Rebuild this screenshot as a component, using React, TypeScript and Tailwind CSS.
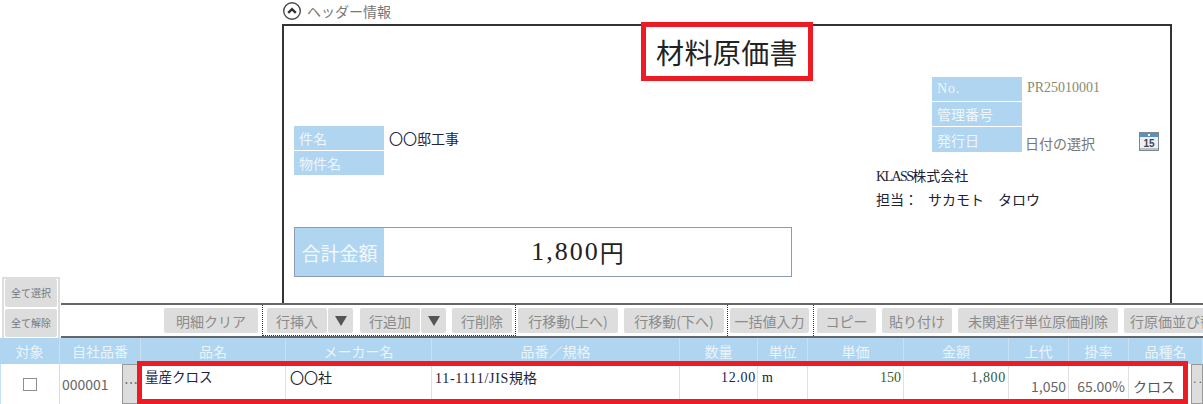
import React from 'react';

const sans = "font-['Noto_Sans_CJK_JP','Noto_Sans',sans-serif]";
const serif = "font-['Liberation_Serif',serif] text-[14px]";
const gridCols = 'grid-cols-[60px_81px_145px_146px_248px_78px_50px_96px_105px_60px_60px_62px_12px]';

const headers = [
  { label: '対象', span: 'col-span-1' },
  { label: '自社品番', span: 'col-span-1' },
  { label: '品名', span: 'col-span-1' },
  { label: 'メーカー名', span: 'col-span-1' },
  { label: '品番／規格', span: 'col-span-1' },
  { label: '数量', span: 'col-span-1' },
  { label: '単位', span: 'col-span-1' },
  { label: '単価', span: 'col-span-1' },
  { label: '金額', span: 'col-span-1' },
  { label: '上代', span: 'col-span-1' },
  { label: '掛率', span: 'col-span-1' },
  { label: '品種名', span: 'col-span-2' },
];

const ToolButton: React.FC<{ width: string; children: React.ReactNode; className?: string }> = ({
  width,
  children,
  className = '',
}) => (
  <button
    type="button"
    className={`flex h-[25px] shrink-0 items-center justify-center overflow-hidden whitespace-nowrap rounded-[2px] bg-[#dddddd] text-[14px] leading-none text-[#8b8b8b] ${width} ${className}`}
  >
    {children}
  </button>
);

const Arrow = () => (
  <svg width="14" height="12" viewBox="0 0 14 12" aria-hidden="true">
    <path d="M1 1h12L7 11z" fill="#555555" />
  </svg>
);

const BlueLabel: React.FC<{ children: React.ReactNode; className?: string }> = ({ children, className = '' }) => (
  <div
    className={`flex h-[24px] w-[90px] shrink-0 items-center bg-[#b0d5f0] pl-[5px] text-[14px] leading-none text-[#eef6fc] ${className}`}
  >
    {children}
  </div>
);

const CalendarIcon = () => (
  <svg width="20" height="19" viewBox="0 0 20 19" aria-hidden="true">
    <rect x="0.5" y="0.5" width="19" height="18" fill="#eef1f4" stroke="#7c8792" />
    <rect x="1" y="1" width="18" height="4" fill="#5b8fc0" />
    <rect x="9" y="2" width="2" height="2" fill="#ffffff" />
    <rect x="1" y="16" width="18" height="2" fill="#b9c0c8" />
    <text x="10" y="15" textAnchor="middle" fontSize="10" fontWeight="700" fill="#3c4650" fontFamily="Liberation Sans, sans-serif">
      15
    </text>
  </svg>
);

export default function App() {
  return (
    <div className={`relative h-[404px] w-[1203px] overflow-hidden bg-white ${sans}`}>
      <div className="flex h-[338px]">
        <div className="flex w-[61px] shrink-0 items-end pl-[2px]">
          <div className="flex h-[61px] w-[58px] flex-col gap-[2px] border-[2px] border-b-0 border-[#dddddd] px-[1px]">
            {['全て選択', '全て解除'].map((label) => (
              <button
                key={label}
                type="button"
                className="flex h-[28px] items-center justify-center rounded-[2px] bg-[#dddddd] text-[10px] leading-none text-[#777777]"
              >
                {label}
              </button>
            ))}
          </div>
        </div>

        <div className="flex min-w-0 flex-1 flex-col">
          <div className="flex h-[24px] items-center gap-[6px] pb-[3px] pl-[222px]">
            <svg width="18" height="18" viewBox="0 0 18 18" aria-hidden="true">
              <circle cx="9" cy="9" r="8.3" fill="none" stroke="#4a4a4a" strokeWidth="1.4" />
              <path d="M5.2 10.8 9 7.2l3.8 3.6" fill="none" stroke="#2f2f2f" strokeWidth="2.4" />
            </svg>
            <span className="text-[14px] leading-none text-[#777777]">ヘッダー情報</span>
          </div>

          <div className="ml-[221px] h-[279px] w-[890px] border-[2px] border-b-0 border-[#333333]">
            <div className="flex h-[51px] items-center justify-center">
              <span className="text-[28px] leading-none tracking-[0.4px] text-[#222222]">材料原価書</span>
            </div>

            <div className="flex">
              <div className="ml-[10px] w-[498px] pt-[49px]">
                <div className="flex h-[24px] items-center">
                  <BlueLabel>件名</BlueLabel>
                  <span className="ml-[5px] text-[14px] leading-none text-[#222244]">〇〇邸工事</span>
                </div>
                <BlueLabel className="mt-[1px]">物件名</BlueLabel>

                <div className="mt-[52px] flex h-[50px] items-stretch border border-[#8c9cb0]">
                  <div className="flex w-[89px] items-center justify-center bg-[#b0d5f0] text-[19px] leading-none text-[#f2f8fd]">
                    合計金額
                  </div>
                  <div className="flex flex-1 items-center justify-center pr-[20px] text-[24px] leading-none text-[#222222]">
                    <span className="font-['Liberation_Serif',serif] text-[26px] tracking-[2px]">1,800</span>円
                  </div>
                </div>
              </div>

              <div className="ml-[84px] flex-1">
                <div className="ml-[56px]">
                  <div className="flex">
                    <BlueLabel className={`tracking-[1px] ${serif}`}>No.</BlueLabel>
                    <span className={`ml-[5px] mt-[3px] leading-[16px] text-[#8a8a70] ${serif}`}>PR25010001</span>
                  </div>
                  <BlueLabel className="mt-[1px]">管理番号</BlueLabel>
                  <div className="mt-[1px] flex">
                    <BlueLabel className="h-[25px]">発行日</BlueLabel>
                    <span className="ml-[3px] mt-[8px] text-[14px] leading-[16px] text-[#777777]">日付の選択</span>
                    <span className="ml-[44px] mt-[5px]">
                      <CalendarIcon />
                    </span>
                  </div>
                </div>
                <div className="mt-[13px] text-[14px] leading-[20px] text-[#222233]">
                  <span className="font-['Liberation_Serif',serif] text-[14px] tracking-[-1.6px]">KLASS</span>株式会社
                </div>
                <div className="mt-[2px] flex text-[14px] leading-[20px] text-[#222233]">
                  <span>担当：</span>
                  <span className="ml-[10px]">サカモト</span>
                  <span className="ml-[14px]">タロウ</span>
                </div>
              </div>
            </div>
          </div>

          <div className="flex h-[35px] items-start border-y-[2px] border-y-[#666666] pl-[103px]">
            <ToolButton width="w-[94px]" className="mt-[3px]">明細クリア</ToolButton>

            <div className="ml-[4px] flex h-[31px] w-[254px] shrink-0 items-start border-x border-b border-dotted border-[#333333] pl-[4px] pt-[3px]">
              <ToolButton width="w-[60px]">行挿入</ToolButton>
              <ToolButton width="w-[25px]" className="ml-[1px]"><Arrow /></ToolButton>
              <ToolButton width="w-[60px]" className="ml-[7px]">行追加</ToolButton>
              <ToolButton width="w-[25px]" className="ml-[1px]"><Arrow /></ToolButton>
              <ToolButton width="w-[60px]" className="ml-[6px]">行削除</ToolButton>
            </div>

            <div className="flex h-[31px] w-[212px] shrink-0 items-start gap-[6px] border-r border-dotted border-r-[#333333] pl-[2px] pt-[3px]">
              <ToolButton width="w-[100px]">行移動(上へ)</ToolButton>
              <ToolButton width="w-[100px]">行移動(下へ)</ToolButton>
            </div>

            <div className="flex h-[31px] w-[86px] shrink-0 items-start border-r border-dotted border-r-[#333333] pl-[2px] pt-[3px]">
              <ToolButton width="w-[79px]">一括値入力</ToolButton>
            </div>

            <div className="flex shrink-0 items-start gap-[6px] pl-[3px] pt-[3px]">
              <ToolButton width="w-[59px]">コピー</ToolButton>
              <ToolButton width="w-[70px]">貼り付け</ToolButton>
              <ToolButton width="w-[160px]">未関連行単位原価削除</ToolButton>
              <ToolButton width="w-[110px]">行原価並び替え</ToolButton>
            </div>
          </div>
        </div>
      </div>

      <div className={`grid h-[26px] ${gridCols} bg-[#b0d5f0]`}>
        {headers.map((header) => (
          <div
            key={header.label}
            className={`flex items-center justify-center border-r border-[#c6e0f4] text-[14px] leading-none text-[#eaf4fb] ${header.span}`}
          >
            {header.label}
          </div>
        ))}
      </div>

      <div className={`grid h-[40px] ${gridCols} text-[14px] leading-none`}>
        <div className="flex items-center justify-center border-x border-[#c6e0f4]">
          <span className="block h-[13px] w-[14px] border border-[#8f8f8f]" />
        </div>
        <div className="flex items-stretch border-r border-[#e0e0e0]">
          <span className="flex flex-1 items-center pl-[2px] text-[#666666]">000001</span>
          <button type="button" className="w-[18px] border border-[#999999] bg-[#dddddd] pb-[4px] text-[#555555]">
            …
          </button>
        </div>
        <div className="border-r border-[#e0e0e0] pl-[4px] pt-[6px] text-[13.5px] text-[#222244]">量産クロス</div>
        <div className="border-r border-[#e0e0e0] pl-[4px] pt-[6px] text-[#222222]">〇〇社</div>
        <div className="border-r border-[#e0e0e0] pl-[3px] pt-[6px] text-[#222233]">
          <span className={`tracking-[0.7px] ${serif}`}>11-1111/JIS</span>規格
        </div>
        <div className={`border-r border-[#e0e0e0] pr-[1px] pt-[7px] text-right tracking-[0.7px] text-[#222255] ${serif}`}>12.00</div>
        <div className={`border-r border-[#e0e0e0] pl-[4px] pt-[7px] text-[#222222] ${serif}`}>m</div>
        <div className={`border-r border-[#e0e0e0] pr-[2px] pt-[7px] text-right text-[#3c5a2a] ${serif}`}>150</div>
        <div className={`border-r border-[#e0e0e0] pr-[2px] pt-[7px] text-right tracking-[0.7px] text-[#2f5a4a] ${serif}`}>1,800</div>
        <div className="flex items-center justify-end border-r border-[#e0e0e0] pr-[2px] pt-[3px] text-[#666666]">1,050</div>
        <div className="flex items-center justify-end border-r border-[#e0e0e0] pr-[3px] pt-[3px] text-[#666666]">65.00%</div>
        <div className="flex items-center pl-[4px] pt-[3px] text-[#555555]">クロス</div>
        <button type="button" className="overflow-hidden border border-[#999999] bg-[#dddddd] pb-[4px] text-center text-[10px] text-[#555555]">
          ··
        </button>
      </div>

      {/* red highlight marks drawn over the form */}
      <div className="absolute left-[641px] top-[22px] h-[59px] w-[172px] border-[5px] border-[#ed1c24]" />
      <div className="absolute left-[137px] top-[361px] h-[43px] w-[1051px] border-[5px] border-[#ed1c24]" />
    </div>
  );
}
